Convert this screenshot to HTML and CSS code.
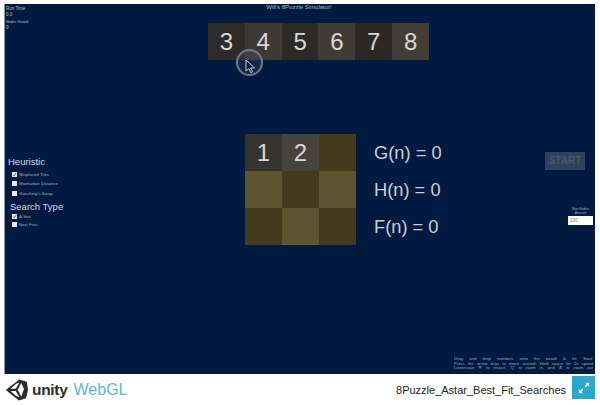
FILE: index.html
```html
<!DOCTYPE html>
<html>
<head>
	<title>8Puzzle_Astar_Best_Fit_Searches</title>
	<link rel="stylesheet" href="styles.css">
</head>
<body>
	<div class="game">
		<div class="stats">
			<div>Run Time</div>
			<div>0.0</div>
			<div class="stats-small">Nodes Visited</div>
			<div>0</div>
		</div>
		<div class="top">
			<div class="sim-title">Will's 8Puzzle Simulator!</div>
			<div class="tray">
				<div class="tile t1">3</div>
				<div class="tile t2">4</div>
				<div class="tile t3">5</div>
				<div class="tile t4">6</div>
				<div class="tile t5">7</div>
				<div class="tile t6">8</div>
			</div>
		</div>

		<div class="options">
			<div class="opt-head">Heuristic</div>
			<label class="opt"><span class="box"><svg width="5" height="5" viewBox="0 0 5 5"><path d="M1 2.5 L2.2 3.8 L4.2 1" fill="none" stroke="#4f6384" stroke-width="1"/></svg></span>Misplaced Tiles</label>
			<label class="opt"><span class="box"></span>Manhattan Distance</label>
			<label class="opt"><span class="box"></span>Gaschnig's Swap</label>
			<div class="opt-head second">Search Type</div>
			<label class="opt tight"><span class="box"><svg width="5" height="5" viewBox="0 0 5 5"><path d="M1 2.5 L2.2 3.8 L4.2 1" fill="none" stroke="#4f6384" stroke-width="1"/></svg></span>A Star</label>
			<label class="opt tight"><span class="box"></span>Best First</label>
		</div>

		<div class="middle">
			<div class="board">
				<div class="tile b1">1</div>
				<div class="tile b2">2</div>
				<div class="cell dark"></div>
				<div class="cell light"></div>
				<div class="cell dark"></div>
				<div class="cell light"></div>
				<div class="cell dark"></div>
				<div class="cell light"></div>
				<div class="cell dark"></div>
			</div>
			<div class="scores">
				<div>G(n) = 0</div>
				<div>H(n) = 0</div>
				<div>F(n) = 0</div>
			</div>
		</div>

		<div class="side">
			<div class="start">START</div>
			<div class="max-label">Max Nodes<br>Amount</div>
			<div class="max-input">100</div>
		</div>

		<div class="help">
			<p>Drag and drop numbers onto the board &amp; hit 'Start'</p>
			<p>Press the arrow keys to move around. Hold space for 2x speed</p>
			<p>Lowercase 'R' to restart. 'Q' to zoom in, and 'A' to zoom out</p>
		</div>

		<div class="pointer">
			<svg width="12" height="15" viewBox="0 0 12 15">
				<path d="M2 1 L2 12 L4.8 9.6 L6.8 13.6 L8.6 12.7 L6.7 9 L10.4 8.8 Z" fill="#0d1a35" stroke="#c9ccd4" stroke-width="1"/>
			</svg>
		</div>
	</div>

	<div class="footer">
		<div class="brand">
			<svg class="logo" width="23" height="22" viewBox="0 0 29 25" preserveAspectRatio="none">
				<path d="M18 0.5 L27.5 3 L29 12.5 L26.5 22 L17.5 24.5 L1 12.5 Z M14 5.5 L7 11 L13.5 11 L18.2 4.2 Z M7 13.5 L14 19.2 L18.2 20.8 L13.5 13.5 Z M16 12.3 L20.5 20 L24 11.5 L20.5 4.5 Z" fill="#2c2c2e" fill-rule="evenodd"/>
			</svg>
			<span class="unity">unity</span>
			<span class="webgl">WebGL</span>
		</div>
		<div class="build">8Puzzle_Astar_Best_Fit_Searches</div>
		<div class="fullscreen">
			<svg width="12" height="12" viewBox="0 0 14 14">
				<path d="M8.5 1 H13 V5.5 L11.4 3.9 L9 6.3 L7.7 5 L10 2.6 Z M5.5 13 H1 V8.5 L2.6 10.1 L5 7.7 L6.3 9 L4 11.4 Z" fill="#fff"/>
			</svg>
		</div>
	</div>
</body>
</html>
```

FILE: styles.css
```css
html, body {
	margin: 0;
	padding: 0;
}

body {
	width: 600px;
	height: 405px;
	overflow: hidden;
	background: #fff;
	font-family: "Liberation Sans", Arial, sans-serif;
}

/* game canvas */
.game {
	position: relative;
	box-sizing: border-box;
	width: 591px;
	height: 370px;
	margin: 4px 0 0 4px;
	background: #011a3f;
	color: #d9dee6;
	display: grid;
	grid-template-columns: 200px 1fr 58px;
	grid-template-rows: 130px 1fr 19px;
	border-left: 1px solid #8b93a3;
}

.stats {
	grid-column: 1;
	grid-row: 1;
	padding: 2px 0 0 1px;
	font-size: 4.5px;
	line-height: 6.3px;
	color: #b9c2d0;
}

.stats-small {
	font-size: 3.6px;
}

.top {
	grid-column: 2 / 4;
	grid-row: 1;
	padding-left: 3px;
}

.sim-title {
	width: 182px;
	height: 19px;
	font-size: 6px;
	line-height: 7px;
	text-align: center;
	color: #a9b3c4;
}

.tray {
	display: flex;
	width: 221px;
}

.tile {
	width: 37px;
	height: 37px;
	display: flex;
	align-items: center;
	justify-content: center;
	font-size: 24px;
	color: #d8d8d6;
}

.t1 { background: #2e2c28; }
.t2 { background: #3d3a35; }
.t3 { background: #2c2a25; }
.t4 { background: #3f3c36; }
.t5 { background: #2b2924; }
.t6 { background: #413e38; }
.b1 { background: #36342f; }
.b2 { background: #46433d; }

.options {
	grid-column: 1;
	grid-row: 2;
	padding: 22px 0 0 3px;
}

.opt-head {
	font-size: 9.5px;
	line-height: 12px;
	margin-bottom: 2px;
	color: #d5dbe5;
}

.opt-head.second {
	margin: 3px 0 0 2px;
}

.opt {
	display: flex;
	align-items: center;
	gap: 2px;
	height: 9.3px;
	padding-left: 4px;
	font-size: 4.4px;
	color: #a6b0c0;
}

.opt.tight {
	height: 8px;
}

.box {
	display: flex;
	width: 5px;
	height: 5px;
	background: #e8eaee;
	flex: none;
}

.middle {
	grid-column: 2;
	grid-row: 2;
	display: flex;
	padding-left: 40px;
}

.board {
	display: grid;
	grid-template-columns: repeat(3, 37px);
	grid-template-rows: repeat(3, 37px);
	height: 111px;
}

.cell.dark { background: #453a1c; }
.cell.light { background: #5f5430; }

.scores {
	margin-left: 18px;
	font-size: 18.3px;
	line-height: 37px;
	color: #c8cfda;
}

.side {
	grid-column: 3;
	grid-row: 2;
	display: flex;
	flex-direction: column;
	align-items: flex-end;
	padding-right: 2px;
}

.start {
	width: 40px;
	height: 18px;
	margin: 18px 8px 0 0;
	background: #2f4161;
	color: #4a5568;
	font-size: 10px;
	font-weight: bold;
	line-height: 18px;
	text-align: center;
}

.max-label {
	width: 25px;
	margin-top: 37px;
	font-size: 3.4px;
	line-height: 4px;
	text-align: center;
	color: #a6b0c0;
}

.max-input {
	width: 25px;
	height: 9px;
	box-sizing: border-box;
	margin-top: 1px;
	padding-left: 2px;
	background: #fff;
	color: #777;
	font-size: 4.5px;
	line-height: 9px;
}

.help {
	grid-column: 2 / 4;
	grid-row: 3;
	justify-self: end;
	width: 139px;
	margin-right: 2px;
	padding-top: 2px;
	font-size: 4.2px;
	line-height: 4.6px;
	color: #9ea9bb;
}

.help p {
	margin: 0;
	text-align: justify;
	text-align-last: justify;
	white-space: nowrap;
}

/* click marker */
.pointer {
	position: absolute;
	left: 231px;
	top: 45px;
	width: 27px;
	height: 27px;
	box-sizing: border-box;
	padding-top: 8px;
	border: 2px solid #6f7886;
	border-radius: 50%;
	background: rgba(70, 85, 115, 0.25);
	display: flex;
	align-items: center;
	justify-content: center;
}

/* bottom bar */
.footer {
	display: flex;
	align-items: center;
	height: 31px;
	padding: 0 5px 0 5px;
}

.brand {
	display: flex;
	align-items: center;
	flex: 1;
}

.logo {
	margin-right: 4px;
}

.unity {
	font-size: 15.5px;
	font-weight: bold;
	color: #2c2c2e;
	letter-spacing: -0.3px;
}

.webgl {
	margin-left: 6px;
	font-size: 16px;
	color: #5fb6d6;
}

.build {
	font-size: 11px;
	color: #1c1c1c;
}

.fullscreen {
	width: 23px;
	height: 23px;
	margin: 0 0 4px 6px;
	background: #2ba8cb;
	display: flex;
	align-items: center;
	justify-content: center;
}
```
